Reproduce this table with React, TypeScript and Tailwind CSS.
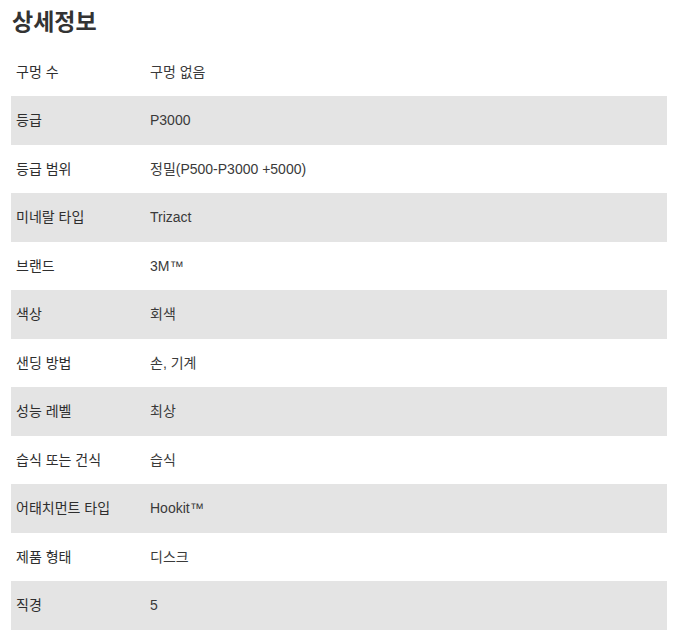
const rows: [string, string][] = [
  ["구멍 수", "구멍 없음"],
  ["등급", "P3000"],
  ["등급 범위", "정밀(P500-P3000 +5000)"],
  ["미네랄 타입", "Trizact"],
  ["브랜드", "3M™"],
  ["색상", "회색"],
  ["샌딩 방법", "손, 기계"],
  ["성능 레벨", "최상"],
  ["습식 또는 건식", "습식"],
  ["어태치먼트 타입", "Hookit™"],
  ["제품 형태", "디스크"],
  ["직경", "5"],
];

export default function App() {
  return (
    <div
      className="h-[632px] w-[680px] overflow-hidden bg-white pl-[11px] pr-[13px] text-[#333]"
      style={{ fontFamily: '"Liberation Sans", "Noto Sans CJK KR", sans-serif' }}
    >
      <h2 className="flex h-[47.5px] items-center pb-[3px] pl-px text-[23px] font-bold text-[#333]">
        상세정보
      </h2>
      <div>
        {rows.map(([label, value], i) => (
          <div
            key={label}
            className={`flex h-[48.5px] items-center text-sm ${i % 2 === 1 ? "bg-[#e4e4e4]" : "bg-white"}`}
          >
            <div className="w-[138px] pl-[5px] text-[#2e2e2e]">{label}</div>
            <div className="pl-px text-[#3a3a3a]">{value}</div>
          </div>
        ))}
      </div>
    </div>
  );
}
